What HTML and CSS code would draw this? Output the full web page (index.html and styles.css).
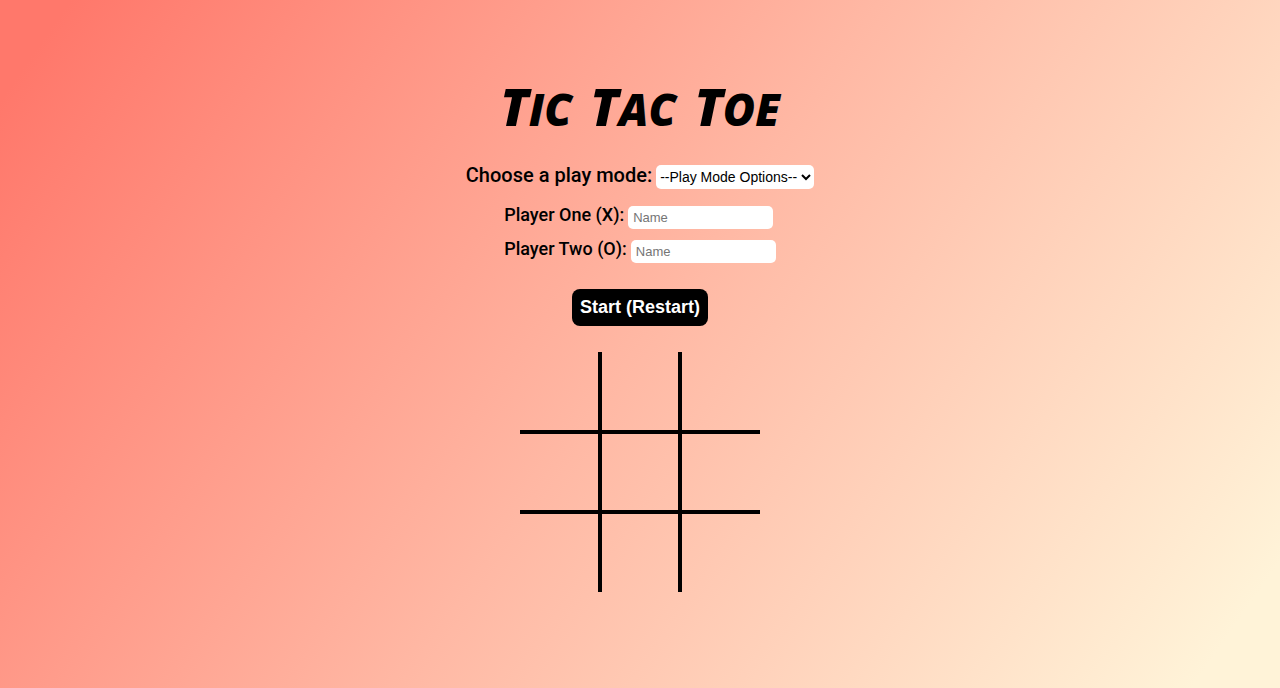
FILE: index.html
```html
<!DOCTYPE html>
<html lang="en">
<head>
  <meta charset="utf-8">
  <meta name="viewport" content="width=device-width, initial-scale=1">
  <title>Tic Tac Toe</title>
  <link rel="stylesheet" href="styles.css">
</head>
<body>
  <main class="page">
    <h1 class="title"><span class="word">T<span class="small">IC</span></span> <span class="word">T<span class="small">AC</span></span> <span class="word">T<span class="small">OE</span></span></h1>
    <form class="setup">
      <div class="mode">
        <label for="mode">Choose a play mode:</label>
        <span class="picker">
          <select id="mode" class="field mode-select">
            <option>--Play Mode Options--</option>
            <option>Player vs Player</option>
            <option>Player vs Computer</option>
          </select>
          <svg class="chevron" viewBox="0 0 10 8" aria-hidden="true"><path d="M1 2l4 4 4-4" fill="none" stroke="#000" stroke-width="2"/></svg>
        </span>
      </div>
      <div class="players">
        <div class="player">
          <label for="one">Player One (X):</label>
          <input id="one" class="field name" type="text" placeholder="Name">
        </div>
        <div class="player">
          <label for="two">Player Two (O):</label>
          <input id="two" class="field name" type="text" placeholder="Name">
        </div>
      </div>
      <button class="start" type="button">Start (Restart)</button>
    </form>
    <div class="board">
      <div class="cell"></div><div class="cell"></div><div class="cell"></div>
      <div class="cell"></div><div class="cell"></div><div class="cell"></div>
      <div class="cell"></div><div class="cell"></div><div class="cell"></div>
    </div>
  </main>
</body>
</html>
```
FILE: styles.css
```css
* {
  box-sizing: border-box;
}

body {
  margin: 0;
  min-height: 100vh;
  font-family: Roboto, "Liberation Sans", sans-serif;
  font-weight: 500;
  color: #000;
  background: linear-gradient(125deg, #ff786b 4%, #ffb8a4 50%, #fff3d8 95%);
}

.page {
  display: flex;
  flex-direction: column;
  align-items: center;
  padding: 70px 16px 96px;
}

.title {
  display: flex;
  gap: 18px;
  margin: 0;
  font: italic 800 52px/72px "Open Sans", sans-serif;
}

.small {
  font-size: 44px;
}

.setup {
  display: flex;
  flex-direction: column;
  align-items: center;
  margin-top: 20px;
}

.mode,
.player {
  display: flex;
  align-items: center;
  gap: 4px;
}

.mode {
  font-size: 20px;
}

.mode label,
.player label {
  padding-bottom: 4px;
  line-height: 20px;
}

.picker {
  position: relative;
  display: flex;
}

.field {
  border: 0;
  border-radius: 5px;
  background: #fff;
  color: #000;
}

.mode-select {
  appearance: none;
  width: 158px;
  height: 24px;
  padding: 0 4px;
  font: 14px "Liberation Sans", Arial, sans-serif;
}

.chevron {
  position: absolute;
  top: 8px;
  right: 3px;
  width: 10px;
  height: 8px;
  pointer-events: none;
}

.players {
  display: flex;
  flex-direction: column;
  gap: 10px;
  margin-top: 16px;
  font-size: 18px;
}

.name {
  width: 145px;
  height: 23px;
  padding: 0 5px;
  font: 13px "Liberation Sans", Arial, sans-serif;
}

.name::placeholder {
  color: #757575;
}

.start {
  margin-top: 26px;
  padding: 8px;
  border: 0;
  border-radius: 8px;
  background: #000;
  color: #fff;
  font: bold 18px/21px "Liberation Sans", Arial, sans-serif;
}

.board {
  display: grid;
  grid-template-columns: 78px 84px 78px;
  grid-template-rows: 78px 84px 78px;
  margin-top: 26px;
}

.cell:nth-child(3n + 2) {
  border-right: 4px solid #000;
  border-left: 4px solid #000;
}

.cell:nth-child(n + 4):nth-child(-n + 6) {
  border-top: 4px solid #000;
  border-bottom: 4px solid #000;
}
```
